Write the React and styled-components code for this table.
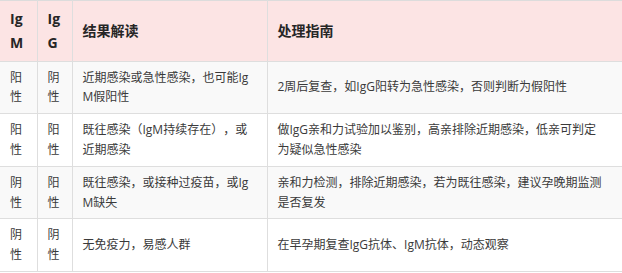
import styled, { createGlobalStyle } from "styled-components";

const GlobalStyle = createGlobalStyle`
  html, body {
    margin: 0;
    padding: 0;
    background: #fff;
  }
  body {
    font-family: "Open Sans", "Noto Sans CJK SC", sans-serif;
  }
`;

const rows = [
  {
    igm: "阳性",
    igg: "阴性",
    result: "近期感染或急性感染，也可能IgM假阳性",
    guide: "2周后复查，如IgG阳转为急性感染，否则判断为假阳性",
  },
  {
    igm: "阳性",
    igg: "阳性",
    result: "既往感染（IgM持续存在），或近期感染",
    guide: "做IgG亲和力试验加以鉴别，高亲排除近期感染，低亲可判定为疑似急性感染",
  },
  {
    igm: "阴性",
    igg: "阳性",
    result: "既往感染，或接种过疫苗，或IgM缺失",
    guide: "亲和力检测，排除近期感染，若为既往感染，建议孕晚期监测是否复发",
  },
  {
    igm: "阴性",
    igg: "阴性",
    result: "无免疫力，易感人群",
    guide: "在早孕期复查IgG抗体、IgM抗体，动态观察",
  },
];

const Table = styled.table`
  width: 622px;
  table-layout: fixed;
  border-collapse: collapse;
  border-top: 1px solid #dcdcdc;
  border-bottom: 1px solid #dcdcdc;
  word-break: break-all;
  text-spacing-trim: space-all;
`;

const Row = styled.tr`
  background: ${(p) => (p.$striped ? "#f9f9f9" : "#fff")};
`;

const HeadRow = styled.tr`
  background: #fce4e4;
`;

const cellBase = `
  padding: 6px 10px;
  vertical-align: middle;
  text-align: left;
  border-left: 1px solid #dedede;
  border-bottom: 1px solid #dedede;
  &:first-child {
    border-left: none;
  }
  &:nth-child(3) {
    padding-right: 14px;
  }
  &:last-child {
    padding-right: 18px;
  }
`;

const HeadCell = styled.th`
  ${cellBase}
  font-size: 14px;
  line-height: 1.7;
  font-weight: 700;
  color: #262626;
`;

const Cell = styled.td`
  ${cellBase}
  font-size: 12px;
  line-height: 1.65;
  color: #3a3a3a;
`;

export default function App() {
  return (
    <>
      <GlobalStyle />
      <Table>
        <colgroup>
          <col style={{ width: 37 }} />
          <col style={{ width: 35 }} />
          <col style={{ width: 195 }} />
          <col style={{ width: 355 }} />
        </colgroup>
        <thead>
          <HeadRow>
            <HeadCell>IgM</HeadCell>
            <HeadCell>IgG</HeadCell>
            <HeadCell>结果解读</HeadCell>
            <HeadCell>处理指南</HeadCell>
          </HeadRow>
        </thead>
        <tbody>
          {rows.map((r, i) => (
            <Row key={i} $striped={i % 2 === 0}>
              <Cell>{r.igm}</Cell>
              <Cell>{r.igg}</Cell>
              <Cell>{r.result}</Cell>
              <Cell>{r.guide}</Cell>
            </Row>
          ))}
        </tbody>
      </Table>
    </>
  );
}
